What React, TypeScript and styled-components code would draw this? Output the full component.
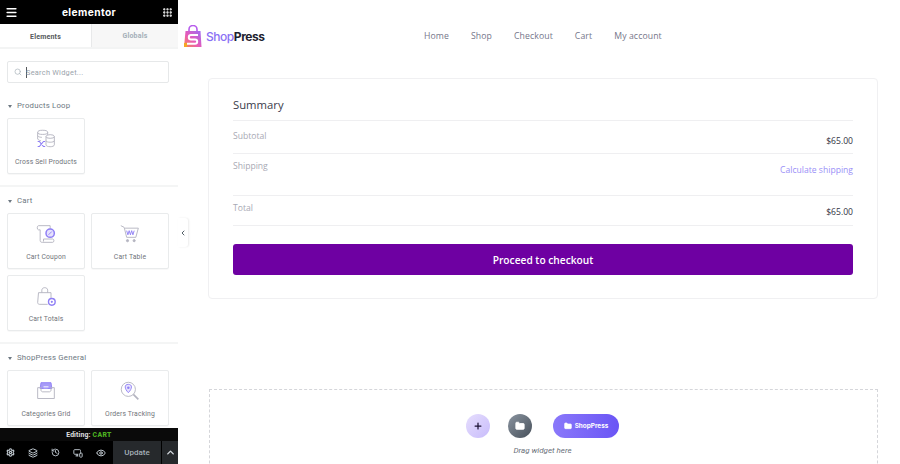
import React from "react";
import styled, { createGlobalStyle } from "styled-components";
import { Menu, Grip, Search, Settings, Layers, History, MonitorSmartphone, Eye, ChevronUp, ChevronLeft, Plus, Folder } from "lucide-react";

const Global = createGlobalStyle`
  html, body { margin: 0; padding: 0; height: 100%; overflow: hidden; background: #fff; }
  #root { height: 100%; }
  * { box-sizing: border-box; }
`;

const Page = styled.div`
  display: flex;
  width: 900px;
  height: 464px;
  overflow: hidden;
  font-family: "Open Sans", "Noto Sans", sans-serif;
`;

const Panel = styled.aside`
  width: 178px;
  flex: none;
  height: 464px;
  display: flex;
  flex-direction: column;
  background: #fafafa;
  font-family: Roboto, sans-serif;
  position: relative;
`;

const TopBar = styled.header`
  height: 24px;
  flex: none;
  background: #000;
  color: #fff;
  display: flex;
  align-items: center;
  justify-content: space-between;
  padding: 0 5px;
`;

const Brand = styled.span`
  font-family: "Inter", sans-serif;
  font-weight: 700;
  font-size: 10.2px;
  letter-spacing: 0.4px;
  margin-right: 2px;
`;

const Tabs = styled.nav`
  height: 23px;
  flex: none;
  display: flex;
`;

const Tab = styled.div<{ $active?: boolean }>`
  width: ${(p) => (p.$active ? "91px" : "87px")};
  background: ${(p) => (p.$active ? "#fff" : "#f7f7f7")};
  color: ${(p) => (p.$active ? "#55595c" : "#a4afb7")};
  border-left: ${(p) => (p.$active ? "none" : "1px solid #e8e9ea")};
  font-size: 7px;
  font-weight: 700;
  display: flex;
  align-items: center;
  justify-content: center;
  padding-top: ${(p) => (p.$active ? "2px" : "0")};
  letter-spacing: 0.2px;
`;

const Scroll = styled.div`
  flex: 1;
  min-height: 0;
  overflow: hidden;
  background: #fff;
  border-top: 2px solid #f3f4f4;
`;

const SearchBox = styled.div`
  margin: 12px 9px 0 7px;
  height: 22px;
  border: 1px solid #e6e8e9;
  border-radius: 2px;
  background: #fff;
  display: flex;
  align-items: center;
  padding-left: 6px;
  gap: 4px;
  color: #9aa3ab;
  font-size: 7.4px;
  letter-spacing: 0.25px;
`;

const Caret = styled.i`
  width: 1px;
  height: 11px;
  background: #55595c;
  margin-right: -5px;
`;

const Section = styled.section<{ $first?: boolean }>`
  padding: ${(p) => (p.$first ? "16px" : "7px")} 9px 11px 7px;
  border-bottom: 2px solid #f4f5f5;
`;

const SectionTitle = styled.h3`
  margin: 0 0 7px;
  height: 12px;
  padding-top: 2px;
  display: flex;
  align-items: center;
  gap: 5px;
  font-size: 7.8px;
  line-height: 10px;
  font-weight: 400;
  color: #6d7882;
  letter-spacing: 0.2px;
  &::before {
    content: "";
    border: 2.5px solid transparent;
    border-top: 3px solid #6d7882;
    border-bottom: 0;
    margin-left: 1px;
  }
`;

const CardGrid = styled.div`
  display: grid;
  grid-template-columns: 78px 78px;
  column-gap: 6px;
  row-gap: 6px;
`;

const Widget = styled.div`
  height: 56px;
  border: 1px solid #e9ebec;
  border-radius: 2px;
  background: #fff;
  box-shadow: 0 1px 1px rgba(0,0,0,0.03);
  display: flex;
  flex-direction: column;
  align-items: center;
  padding-top: 10px;
  color: #70737a;
  font-size: 6.8px;
  line-height: 8px;
  letter-spacing: 0.15px;
  white-space: nowrap;
`;

const WidgetIcon = styled.svg`
  width: 20px;
  height: 20px;
  margin-bottom: 9px;
  fill: none;
  stroke: #b4b4c0;
  stroke-width: 1.1;
`;

const Footer = styled.footer`
  flex: none;
  height: 36px;
  background: #000;
`;

const EditingBar = styled.div`
  height: 13px;
  background: #0a0a0a;
  color: #e0e1e3;
  font-size: 6.8px;
  font-weight: 700;
  display: flex;
  align-items: center;
  justify-content: center;
  gap: 2px;
  letter-spacing: 0.15px;
  b { color: #4caf20; letter-spacing: 0.4px; }
`;

const Tools = styled.div`
  height: 23px;
  display: flex;
  align-items: stretch;
  color: #c2cbd2;
`;

const ToolIcons = styled.div`
  width: 113px;
  display: flex;
  align-items: center;
  justify-content: space-between;
  padding: 0 7px 0 6px;
`;

const UpdateButton = styled.div`
  width: 48px;
  background: #26292c;
  color: #a4afb7;
  font-size: 8px;
  font-weight: 500;
  display: flex;
  align-items: center;
  justify-content: center;
`;

const Expand = styled.div`
  flex: 1;
  margin-left: 1px;
  background: #26292c;
  color: #d5dadf;
  display: flex;
  align-items: center;
  justify-content: center;
`;

const Collapse = styled.div`
  position: absolute;
  left: 178px;
  top: 218px;
  width: 10px;
  height: 29px;
  background: #fff;
  border-radius: 0 3px 3px 0;
  box-shadow: 1px 0 2px rgba(0,0,0,0.08);
  display: flex;
  align-items: center;
  justify-content: center;
  color: #556068;
  z-index: 2;
`;

const Main = styled.main`
  flex: 1;
  min-width: 0;
  background: #fff;
`;

const SiteHeader = styled.header`
  height: 78px;
  display: flex;
  align-items: flex-start;
  padding: 25px 0 0 6px;
`;

const Logo = styled.div`
  display: flex;
  align-items: center;
  gap: 4px;
  width: 240px;
  height: 22px;
`;

const LogoText = styled.span`
  font-family: "Inter", sans-serif;
  font-size: 12px;
  font-weight: 700;
  letter-spacing: -0.45px;
  color: #1e2230;
  span { color: #8a70f5; font-weight: 500; }
`;

const SiteNav = styled.nav`
  display: flex;
  gap: 22px;
  height: 22px;
  align-items: center;
  font-size: 8.7px;
  color: #75768a;
  letter-spacing: 0.1px;
`;

const Card = styled.section`
  margin: 0 22px 0 30px;
  height: 221px;
  border: 1px solid #f0f0f2;
  border-radius: 4px;
  padding: 17px 24px 0;
`;

const CardTitle = styled.h2`
  margin: 0;
  height: 25px;
  font-size: 11.3px;
  line-height: 17px;
  font-weight: 400;
  color: #3a3b4a;
  border-bottom: 1px solid #efeff1;
`;

const Row = styled.div<{ $h: number; $pad: number }>`
  height: ${(p) => p.$h}px;
  display: flex;
  justify-content: space-between;
  align-items: flex-start;
  border-bottom: 1px solid #efeff1;
  font-size: 8.6px;
  line-height: 14px;
  padding-top: ${(p) => p.$pad}px;
`;

const RowLabel = styled.span`
  color: #a8a9b4;
`;

const RowValue = styled.span<{ $link?: boolean; $drop: number }>`
  color: ${(p) => (p.$link ? "#9a8ff7" : "#33343f")};
  margin-top: ${(p) => p.$drop}px;
`;

const Checkout = styled.div`
  margin-top: 18px;
  height: 31px;
  background: #6e00a2;
  border-radius: 3px;
  color: #fff;
  font-size: 10.2px;
  font-weight: 600;
  display: flex;
  align-items: center;
  justify-content: center;
`;

const DropZone = styled.section`
  margin: 90px 22px 0 31px;
  height: 100px;
  border: 1px dashed #d5d6da;
  border-bottom: none;
  padding-top: 24px;
  display: flex;
  flex-direction: column;
  align-items: center;
`;

const DropButtons = styled.div`
  display: flex;
  align-items: center;
  gap: 18px;
  height: 24px;
  margin-right: 2px;
`;

const RoundButton = styled.div<{ $dark?: boolean }>`
  width: 24px;
  height: 24px;
  border-radius: 50%;
  display: flex;
  align-items: center;
  justify-content: center;
  color: ${(p) => (p.$dark ? "#fff" : "#1b1033")};
  background: ${(p) => (p.$dark ? "linear-gradient(135deg,#8a94a0,#47505a)" : "linear-gradient(135deg,#e6defd,#c8bcfb)")};
`;

const ShopButton = styled.div`
  width: 66px;
  height: 24px;
  margin-left: 3px;
  border-radius: 12px;
  background: linear-gradient(90deg, #8a78fa, #6a55f5);
  color: #fff;
  font-family: Inter, sans-serif;
  font-size: 6.4px;
  font-weight: 700;
  display: flex;
  align-items: center;
  justify-content: center;
  gap: 3px;
`;

const DropHint = styled.div`
  margin-top: 8px;
  margin-right: 2px;
  font-family: Roboto, sans-serif;
  font-size: 8px;
  font-style: italic;
  color: #6a7079;
`;

const P = "#8f7ff5";

const icons: Record<string, React.ReactNode> = {
  cross: (
    <>
      <ellipse cx="8" cy="4" rx="6" ry="2.5" />
      <path d="M2 4v8M14 4v3M2 8c1 1.5 3 2 5 2M2 12c1 1.5 3 2 4 2" />
      <ellipse cx="17" cy="9" rx="5" ry="2.2" />
      <path d="M12 9v10c0 3 10 3 10 0V9M12 14c0 2.5 10 2.5 10 0" />
      <path d="M2 15h2l5 6h2M2 21h2l5-6h2" stroke={P} strokeWidth="1.4" />
    </>
  ),
  coupon: (
    <>
      <path d="M3 2h14v10M3 2c-2 0-2 5 0 5h2v13c0 2 2 2 3 2h12c2 0 2-4 0-4H9v3" />
      <circle cx="17" cy="11" r="5" stroke={P} fill="#e6e2fd" strokeWidth="1.8" />
      <path d="M15 13l4-4" stroke={P} />
    </>
  ),
  table: (
    <>
      <path d="M1 2l4 2 3 12h11l3-11H6" />
      <path d="M8 8l1.5 5L11 8l1.5 5L14 8l1.5 5L17 8" stroke={P} />
      <circle cx="9" cy="20" r="1.3" fill="#b4b4c0" />
      <circle cx="17" cy="20" r="1.3" fill="#b4b4c0" />
    </>
  ),
  totals: (
    <>
      <path d="M3 8h15v7M3 8l-1 12c0 1 1 2 2 2h10M7 8V5c0-4 7-4 7 0v3" />
      <circle cx="19" cy="19" r="4" stroke={P} strokeWidth="1.7" fill="#fff" />
      <circle cx="19" cy="19" r="1.3" fill={P} stroke="none" />
    </>
  ),
  grid: (
    <>
      <path d="M5 9l1-7h12l1 7z" fill="#a79bf7" stroke={P} />
      <path d="M2 8h4v3c0 1 1 2 2 2h8c1 0 2-1 2-2V8h4v13H2z" />
      <path d="M9 7h6M9 10h5" stroke="#fff" />
    </>
  ),
  track: (
    <>
      <circle cx="10" cy="10" r="8.5" />
      <path d="M10 4c-5 0-5 5 0 10c5-5 5-10 0-10z" stroke={P} fill="#e6e2fd" />
      <circle cx="10" cy="8" r="1.5" fill={P} stroke="none" />
      <path d="M16 16l6 6" strokeWidth="2" />
    </>
  ),
};

function WidgetCard({ icon, label }: { icon: string; label: string }) {
  return (
    <Widget>
      <WidgetIcon viewBox="0 0 24 24">{icons[icon]}</WidgetIcon>
      {label}
    </Widget>
  );
}

export default function App() {
  return (
    <Page>
      <Global />
      <Panel>
        <TopBar>
          <Menu size={13} strokeWidth={3} />
          <Brand>elementor</Brand>
          <Grip size={11} strokeWidth={3} />
        </TopBar>
        <Tabs>
          <Tab $active>Elements</Tab>
          <Tab>Globals</Tab>
        </Tabs>
        <Scroll>
          <SearchBox>
            <Search size={8} color="#a4afb7" />
            <Caret />
            Search Widget...
          </SearchBox>
          <Section $first>
            <SectionTitle>Products Loop</SectionTitle>
            <CardGrid>
              <WidgetCard icon="cross" label="Cross Sell Products" />
            </CardGrid>
          </Section>
          <Section>
            <SectionTitle>Cart</SectionTitle>
            <CardGrid>
              <WidgetCard icon="coupon" label="Cart Coupon" />
              <WidgetCard icon="table" label="Cart Table" />
              <WidgetCard icon="totals" label="Cart Totals" />
            </CardGrid>
          </Section>
          <Section>
            <SectionTitle>ShopPress General</SectionTitle>
            <CardGrid>
              <WidgetCard icon="grid" label="Categories Grid" />
              <WidgetCard icon="track" label="Orders Tracking" />
            </CardGrid>
          </Section>
        </Scroll>
        <Footer>
          <EditingBar>
            Editing: <b>CART</b>
          </EditingBar>
          <Tools>
            <ToolIcons>
              <Settings size={9} strokeWidth={3} />
              <Layers size={10} strokeWidth={2.4} />
              <History size={9} strokeWidth={2.4} />
              <MonitorSmartphone size={10} strokeWidth={2.2} />
              <Eye size={10} strokeWidth={2.4} />
            </ToolIcons>
            <UpdateButton>Update</UpdateButton>
            <Expand>
              <ChevronUp size={11} strokeWidth={3} />
            </Expand>
          </Tools>
        </Footer>
        <Collapse>
          <ChevronLeft size={8} strokeWidth={3} />
        </Collapse>
      </Panel>
      <Main>
        <SiteHeader>
          <Logo>
            <svg width="18" height="22" viewBox="0 0 18 22" fill="none">
              <defs>
                <linearGradient id="bag" x1="0" y1="1" x2="1" y2="0">
                  <stop offset="0" stopColor="#f78a4a" />
                  <stop offset="0.45" stopColor="#e85ab8" />
                  <stop offset="1" stopColor="#9a6cf5" />
                </linearGradient>
              </defs>
              <path d="M5 6V4.5a4 4 0 0 1 8 0V6" stroke="#b75cec" strokeWidth="1.6" />
              <path d="M1.5 6h15l1 16H0z" fill="url(#bag)" />
              <path d="M0 18h3v4H0z" fill="#f6a623" />
              <path d="M14 10H7a2.2 2.2 0 0 0 0 4.4h4a2.2 2.2 0 0 1 0 4.4H3" stroke="#fff" strokeWidth="2" />
            </svg>
            <LogoText>
              <span>Shop</span>Press
            </LogoText>
          </Logo>
          <SiteNav>
            <span>Home</span>
            <span>Shop</span>
            <span>Checkout</span>
            <span>Cart</span>
            <span>My account</span>
          </SiteNav>
        </SiteHeader>
        <Card>
          <CardTitle>Summary</CardTitle>
          <Row $h={33} $pad={8}>
            <RowLabel>Subtotal</RowLabel>
            <RowValue $drop={5}>$65.00</RowValue>
          </Row>
          <Row $h={42} $pad={5}>
            <RowLabel>Shipping</RowLabel>
            <RowValue $link $drop={4}>Calculate shipping</RowValue>
          </Row>
          <Row $h={30} $pad={5}>
            <RowLabel>Total</RowLabel>
            <RowValue $drop={4}>$65.00</RowValue>
          </Row>
          <Checkout>Proceed to checkout</Checkout>
        </Card>
        <DropZone>
          <DropButtons>
            <RoundButton>
              <Plus size={10} strokeWidth={3} />
            </RoundButton>
            <RoundButton $dark>
              <Folder size={10} fill="#fff" />
            </RoundButton>
            <ShopButton>
              <Folder size={8} fill="#fff" />
              ShopPress
            </ShopButton>
          </DropButtons>
          <DropHint>Drag widget here</DropHint>
        </DropZone>
      </Main>
    </Page>
  );
}
